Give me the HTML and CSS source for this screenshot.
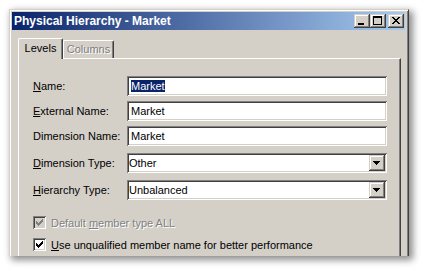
FILE: index.html
```html
<!DOCTYPE html>
<html lang="en">

<head>
    <meta charset="UTF-8">
    <meta name="viewport" content="width=device-width, initial-scale=1.0">
    <title>Physical Hierarchy - Market</title>
    <link rel="stylesheet" href="styles.css">
</head>

<body>

    <div class="window">
        <!-- Title bar -->
        <div class="titlebar">
            <span class="title">Physical Hierarchy - Market</span>
            <div class="caption-buttons">
                <span class="cbtn">
                    <svg width="16" height="14" viewBox="0 0 16 14" shape-rendering="crispEdges">
                        <path d="M4 9h6v2h-6z" fill="#000" />
                    </svg>
                </span>
                <span class="cbtn">
                    <svg width="16" height="14" viewBox="0 0 16 14" shape-rendering="crispEdges">
                        <path d="M3 2h9v9h-9z M4 4v6h7v-6z" fill="#000" fill-rule="evenodd" />
                    </svg>
                </span>
                <span class="cbtn close">
                    <svg width="16" height="14" viewBox="0 0 16 14" shape-rendering="crispEdges">
                        <path d="M4 3h2v1h-2z M10 3h2v1h-2z M5 4h2v1h-2z M9 4h2v1h-2z M6 5h4v1h-4z M7 6h2v1h-2z M6 7h4v1h-4z M5 8h2v1h-2z M9 8h2v1h-2z M4 9h2v1h-2z M10 9h2v1h-2z" fill="#000" />
                    </svg>
                </span>
            </div>
        </div>

        <div class="client">
            <!-- Tabs -->
            <div class="tabs">
                <div class="tab active">Levels</div>
                <div class="tab disabled">Columns</div>
            </div>

            <div class="page">
                <div class="field">
                    <label><u>N</u>ame:</label>
                    <div class="edit"><span class="sel">Market</span></div>
                </div>
                <div class="field">
                    <label><u>E</u>xternal Name:</label>
                    <div class="edit">Market</div>
                </div>
                <div class="field">
                    <label>Dimension Name:</label>
                    <div class="edit">Market</div>
                </div>
                <div class="field combo">
                    <label><u>D</u>imension Type:</label>
                    <div class="edit select">
                        <span class="value">Other</span>
                        <span class="drop">
                            <svg width="12" height="12" viewBox="0 0 12 12" shape-rendering="crispEdges">
                                <path d="M2 4h7v1h-7z M3 5h5v1h-5z M4 6h3v1h-3z M5 7h1v1h-1z" fill="#000" />
                            </svg>
                        </span>
                    </div>
                </div>
                <div class="field combo">
                    <label><u>H</u>ierarchy Type:</label>
                    <div class="edit select">
                        <span class="value">Unbalanced</span>
                        <span class="drop">
                            <svg width="12" height="12" viewBox="0 0 12 12" shape-rendering="crispEdges">
                                <path d="M2 4h7v1h-7z M3 5h5v1h-5z M4 6h3v1h-3z M5 7h1v1h-1z" fill="#000" />
                            </svg>
                        </span>
                    </div>
                </div>

                <div class="checks">
                    <div class="check disabled">
                        <span class="box">
                            <svg width="13" height="13" viewBox="0 0 13 13" shape-rendering="crispEdges">
                                <path d="M9 3h1v1h-1z M8 4h2v1h-2z M3 5h1v1h-1z M7 5h3v1h-3z M3 6h2v1h-2z M6 6h3v1h-3z M3 7h5v1h-5z M4 8h3v1h-3z M5 9h1v1h-1z" fill="#808080" />
                            </svg>
                        </span>
                        <span>Default <u>m</u>ember type ALL</span>
                    </div>
                    <div class="check">
                        <span class="box">
                            <svg width="13" height="13" viewBox="0 0 13 13" shape-rendering="crispEdges">
                                <path d="M9 3h1v1h-1z M8 4h2v1h-2z M3 5h1v1h-1z M7 5h3v1h-3z M3 6h2v1h-2z M6 6h3v1h-3z M3 7h5v1h-5z M4 8h3v1h-3z M5 9h1v1h-1z" fill="#000" />
                            </svg>
                        </span>
                        <span><u>U</u>se unqualified member name for better performance</span>
                    </div>
                </div>
            </div>
        </div>
    </div>

</body>

</html>
```

FILE: styles.css
```css
* {
    box-sizing: border-box;
}

body {
    margin: 0;
    height: 271px;
    overflow: hidden;
    background: #fff;
    font-family: "Liberation Sans", Arial, sans-serif;
    font-size: 11px;
    color: #000;
}

.window {
    margin: 9px 0 0 9px;
    width: 400px;
    height: 247px;
    background: #d4d0c8;
    border: 1px solid;
    border-color: #d4d0c8 #404040 transparent #d4d0c8;
    border-bottom: 0;
    padding: 2px 3px 0 2px;
    display: flex;
    flex-direction: column;
    box-shadow: inset 1px 1px 0 #fff, inset -1px 0 0 #808080, 3px 3px 7px 1px rgba(0, 0, 0, 0.45);
}

/* title bar */
.titlebar {
    height: 18px;
    display: flex;
    align-items: center;
    padding: 0 1px 0 2px;
    background: linear-gradient(to right, #0a246a, #a6caf0);
    color: #fff;
    font-size: 12px;
    font-weight: bold;
}

.caption-buttons {
    margin-left: auto;
    display: flex;
}

.cbtn {
    width: 16px;
    height: 14px;
    display: block;
    background: #d4d0c8;
    box-shadow: inset -1px -1px 0 #404040, inset 1px 1px 0 #d4d0c8, inset -2px -2px 0 #808080, inset 2px 2px 0 #fff;
}

.cbtn svg {
    display: block;
}

.cbtn.close {
    margin-left: 2px;
}

/* tabs */
.client {
    flex: 1;
    display: flex;
    flex-direction: column;
    padding: 8px 4px 0 6px;
}

.tabs {
    height: 20px;
    display: flex;
    align-items: flex-end;
}

.tab {
    height: 18px;
    display: flex;
    align-items: center;
    justify-content: center;
    padding-bottom: 1px;
    background: #d4d0c8;
    border-top: 1px solid #fff;
    border-left: 1px solid #fff;
    border-right: 1px solid #404040;
    border-radius: 2px 2px 0 0;
    box-shadow: inset -1px 0 0 #808080;
}

.tab.active {
    width: 45px;
    height: 21px;
    margin-bottom: -1px;
    padding-bottom: 2px;
    position: relative;
    z-index: 1;
}

.tab.disabled {
    width: 51px;
    color: #808080;
    text-shadow: 1px 1px 0 #fff;
}

/* tab page */
.page {
    flex: 1;
    border-top: 1px solid #fff;
    border-left: 1px solid #fff;
    border-right: 1px solid #404040;
    box-shadow: inset -1px 0 0 #808080;
    padding: 17px 13px 0 14px;
}

.field {
    height: 20px;
    display: flex;
    align-items: center;
    margin-bottom: 5px;
}

.field.combo {
    margin-top: 7px;
}

.field label {
    width: 94px;
    flex-shrink: 0;
}

.edit {
    flex: 1;
    height: 20px;
    display: flex;
    align-items: center;
    padding: 0 2px 1px 4px;
    background: #fff;
    box-shadow: inset 1px 1px 0 #808080, inset -1px -1px 0 #fff, inset 2px 2px 0 #404040, inset -2px -2px 0 #d4d0c8;
}

.sel {
    background: #0a246a;
    color: #fff;
}

.edit.select {
    padding: 2px 2px 2px 4px;
}

.select .value {
    flex: 1;
    margin-left: -2px;
    padding-bottom: 1px;
}

.drop {
    width: 16px;
    height: 16px;
    display: flex;
    align-items: center;
    justify-content: center;
    background: #d4d0c8;
    box-shadow: inset -1px -1px 0 #404040, inset 1px 1px 0 #d4d0c8, inset -2px -2px 0 #808080, inset 2px 2px 0 #fff;
}

.drop svg {
    display: block;
}

/* check boxes */
.checks {
    margin-top: 16px;
    display: flex;
    flex-direction: column;
    gap: 9px;
}

.check {
    height: 13px;
    display: flex;
    align-items: center;
    gap: 5px;
}

.box {
    width: 13px;
    height: 13px;
    display: block;
    background: #fff;
    box-shadow: inset 1px 1px 0 #808080, inset -1px -1px 0 #fff, inset 2px 2px 0 #404040, inset -2px -2px 0 #d4d0c8;
}

.box svg {
    display: block;
}

.check.disabled .box {
    background: #d4d0c8;
}

.check.disabled span:last-child {
    color: #808080;
    text-shadow: 1px 1px 0 #fff;
}
```
